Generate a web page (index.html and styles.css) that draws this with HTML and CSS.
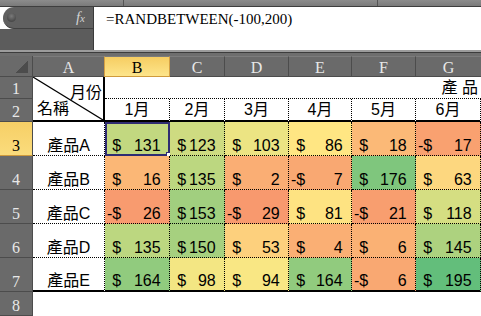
FILE: index.html
```html
<!DOCTYPE html>
<html lang="zh-Hant">
<head>
<meta charset="utf-8">
<title>RANDBETWEEN</title>
<link rel="stylesheet" href="styles.css">
</head>
<body>
<div class="app">
  <div class="topstrip"><span class="seg seg1"></span><span class="seg seg2"></span></div>
  <div class="fbar">
    <div class="namepanel">
      <div class="namebox"><div class="nbin"><span class="knob"></span><span class="fx">f<span class="fxx">x</span></span></div></div>
      <div class="namelow"></div>
    </div>
    <div class="formula">=RANDBETWEEN(-100,200)</div>
  </div>
  <div class="split"></div>
  <div class="sheet">
    <div class="corner"></div>
    <div class="ch">A</div>
    <div class="ch sel">B</div>
    <div class="ch">C</div>
    <div class="ch">D</div>
    <div class="ch">E</div>
    <div class="ch">F</div>
    <div class="ch last">G</div>

    <div class="rh">1</div>
    <div class="a12">
      <svg class="diag" viewBox="0 0 100 100" preserveAspectRatio="none"><line x1="0" y1="0" x2="100" y2="100" stroke="#000" stroke-width="1.2" vector-effect="non-scaling-stroke"/></svg>
      <span class="mon">月份</span>
      <span class="nam">名稱</span>
    </div>
    <div class="b1">產 品</div>

    <div class="rh">2</div>
    <div class="m">1月</div>
    <div class="m">2月</div>
    <div class="m">3月</div>
    <div class="m">4月</div>
    <div class="m">5月</div>
    <div class="m">6月</div>

    <div class="rh sel">3</div>
    <div class="lab">產品A</div>
    <div class="d cur" style="background:#C2D880"><span class="sg off">-</span><span>$</span><span class="v">131</span><span class="tr">-</span><span class="selbox"><span class="hdl"></span></span></div>
    <div class="d" style="background:#CEDB81"><span class="sg off">-</span><span>$</span><span class="v">123</span><span class="tr">-</span></div>
    <div class="d" style="background:#ECE483"><span class="sg off">-</span><span>$</span><span class="v">103</span><span class="tr">-</span></div>
    <div class="d" style="background:#FFE683"><span class="sg off">-</span><span>$</span><span class="v">86</span><span class="tr">-</span></div>
    <div class="d" style="background:#FBB977"><span class="sg off">-</span><span>$</span><span class="v">18</span><span class="tr">-</span></div>
    <div class="d" style="background:#F9A170"><span class="sg">-</span><span>$</span><span class="v">17</span><span class="tr">-</span></div>

    <div class="rh">4</div>
    <div class="lab">產品B</div>
    <div class="d" style="background:#FBB776"><span class="sg off">-</span><span>$</span><span class="v">16</span><span class="tr">-</span></div>
    <div class="d" style="background:#BCD780"><span class="sg off">-</span><span>$</span><span class="v">135</span><span class="tr">-</span></div>
    <div class="d" style="background:#FAAE74"><span class="sg off">-</span><span>$</span><span class="v">2</span><span class="tr">-</span></div>
    <div class="d" style="background:#F9A872"><span class="sg">-</span><span>$</span><span class="v">7</span><span class="tr">-</span></div>
    <div class="d" style="background:#7FC67D"><span class="sg off">-</span><span>$</span><span class="v">176</span><span class="tr">-</span></div>
    <div class="d" style="background:#FDD77F"><span class="sg off">-</span><span>$</span><span class="v">63</span><span class="tr">-</span></div>

    <div class="rh">5</div>
    <div class="lab">產品C</div>
    <div class="d" style="background:#F89B6F"><span class="sg">-</span><span>$</span><span class="v">26</span><span class="tr">-</span></div>
    <div class="d" style="background:#A1CF7F"><span class="sg off">-</span><span>$</span><span class="v">153</span><span class="tr">-</span></div>
    <div class="d" style="background:#F8996E"><span class="sg">-</span><span>$</span><span class="v">29</span><span class="tr">-</span></div>
    <div class="d" style="background:#FEE382"><span class="sg off">-</span><span>$</span><span class="v">81</span><span class="tr">-</span></div>
    <div class="d" style="background:#F89E6F"><span class="sg">-</span><span>$</span><span class="v">21</span><span class="tr">-</span></div>
    <div class="d" style="background:#D5DE82"><span class="sg off">-</span><span>$</span><span class="v">118</span><span class="tr">-</span></div>

    <div class="rh">6</div>
    <div class="lab">產品D</div>
    <div class="d" style="background:#BCD780"><span class="sg off">-</span><span>$</span><span class="v">135</span><span class="tr">-</span></div>
    <div class="d" style="background:#A6D07F"><span class="sg off">-</span><span>$</span><span class="v">150</span><span class="tr">-</span></div>
    <div class="d" style="background:#FDD07D"><span class="sg off">-</span><span>$</span><span class="v">53</span><span class="tr">-</span></div>
    <div class="d" style="background:#FAAF74"><span class="sg off">-</span><span>$</span><span class="v">4</span><span class="tr">-</span></div>
    <div class="d" style="background:#FAB174"><span class="sg off">-</span><span>$</span><span class="v">6</span><span class="tr">-</span></div>
    <div class="d" style="background:#ADD27F"><span class="sg off">-</span><span>$</span><span class="v">145</span><span class="tr">-</span></div>

    <div class="rh">7</div>
    <div class="lab r7">產品E</div>
    <div class="d r7" style="background:#91CB7E"><span class="sg off">-</span><span>$</span><span class="v">164</span><span class="tr">-</span></div>
    <div class="d r7" style="background:#F3E683"><span class="sg off">-</span><span>$</span><span class="v">98</span><span class="tr">-</span></div>
    <div class="d r7" style="background:#F9E784"><span class="sg off">-</span><span>$</span><span class="v">94</span><span class="tr">-</span></div>
    <div class="d r7" style="background:#91CB7E"><span class="sg off">-</span><span>$</span><span class="v">164</span><span class="tr">-</span></div>
    <div class="d r7" style="background:#F9A872"><span class="sg">-</span><span>$</span><span class="v">6</span><span class="tr">-</span></div>
    <div class="d r7" style="background:#63BE7B"><span class="sg off">-</span><span>$</span><span class="v">195</span><span class="tr">-</span></div>

    <div class="rh">8</div>
    <div class="empty"></div>
  </div>
</div>
</body>
</html>
```
FILE: styles.css
```css
* { box-sizing: border-box; margin: 0; padding: 0; }
html, body { width: 481px; height: 316px; overflow: hidden; background: #fff; }
body { font-family: "Liberation Sans", "Noto Sans CJK TC", sans-serif; color: #000; }

.topstrip { height: 7px; display: flex; background: linear-gradient(#8c8c8c, #7a7a7a); border-bottom: 1px solid #3e3e3e; }
.seg { display: block; height: 100%; border-right: 1px solid #555; }
.seg1 { width: 124px; }
.seg2 { width: 254px; }

.fbar { display: flex; height: 43px; }
.namepanel { width: 94px; display: flex; flex-direction: column; background: #5c5c5c; border-right: 1px solid #3a3a3a; }
.namebox { height: 22px; background: #fff; }
.nbin { height: 100%; margin-left: 3px; background: #606060; border-radius: 11px 0 0 11px; border-bottom: 1px solid #404040; display: flex; align-items: center; }
.knob { width: 9px; height: 9px; border-radius: 50%; margin-left: 4px; background: radial-gradient(circle at 50% 35%, #7a7a7a, #4a4a4a 70%); }
.fx { margin-left: auto; margin-right: 8px; font-family: "Liberation Serif", serif; font-style: italic; font-size: 15px; color: #d2d2d2; line-height: 1; }
.fxx { font-size: 11px; }
.namelow { flex: 1; background: #5c5c5c; }
.formula { flex: 1; background: #fff; padding: 5px 0 0 12px; font-family: "Liberation Serif", serif; font-size: 15px; line-height: 15px; white-space: nowrap; }

.split { height: 6px; background: linear-gradient(#9c9c9c 0 2px, #3c3c3c 2px 3px, #6e6e6e 3px); }

.sheet {
  display: grid;
  grid-template-columns: 33px 72px 65px 55px 64px 63px 64px 65px;
  grid-template-rows: 21px 22px 23px 34px 34px 34px 34px 34px 24px;
}

.corner { background: linear-gradient(to bottom right, transparent 50%, #4c4c4c 50%) no-repeat right 4px bottom 3px / 13px 12px, #6a6a6a; border-right: 1px solid #4c4c4c; border-bottom: 1px solid #4c4c4c; }
.ch { background: #6a6a6a; border-right: 1px solid #4c4c4c; border-bottom: 1px solid #4c4c4c; border-top: 1px solid #7c7c7c; color: #e8e8e8; font-family: "Liberation Serif", serif; font-size: 16px; line-height: 1; display: flex; justify-content: center; align-items: flex-end; }
.ch.last { border-right: none; }
.ch.sel { background: linear-gradient(#f6cd62, #fde58b); color: #000; border-right: 1px solid #d4a044; border-left: 1px solid #d4a044; border-bottom: 1px solid #cf9a3c; margin-left: -1px; }

.rh { background: #6a6a6a; border-right: 1px solid #4c4c4c; border-bottom: 1px solid #4c4c4c; color: #e8e8e8; font-family: "Liberation Serif", serif; font-size: 16px; line-height: 1; display: flex; justify-content: center; align-items: flex-end; padding-bottom: 1px; }
.rh.sel { background: linear-gradient(#f6cf66, #fbdc7c); color: #000; border-bottom: 1px solid #cf9a3c; }

.a12 { grid-row: span 2; position: relative; border-right: 2px solid #000; border-bottom: 2px solid #000; display: flex; flex-direction: column; justify-content: space-between; font-size: 16px; line-height: 1; padding: 8px 1px 3px 4px; }
.diag { position: absolute; left: 0; top: 0; width: 100%; height: 100%; }
.mon { align-self: flex-end; }
.nam { align-self: flex-start; }

.b1 { grid-column: span 6; border-bottom: 1px dotted #000; display: flex; justify-content: flex-end; align-items: flex-end; font-size: 16px; line-height: 1; padding: 0 3px 2px 0; }

.m { border-right: 1px dotted #000; border-bottom: 2px solid #000; display: flex; justify-content: center; align-items: flex-end; font-size: 16px; line-height: 1; padding-bottom: 2px; }

.lab { border-right: 1px dotted #000; border-bottom: 1px dotted #000; display: flex; justify-content: center; align-items: flex-end; font-size: 16px; line-height: 1; padding-bottom: 1px; }

.d { position: relative; border-right: 1px dotted #000; border-bottom: 1px dotted #000; display: flex; align-items: flex-end; font-size: 16px; line-height: 1; padding: 0 3px 1px 2px; white-space: nowrap; }
.d .v { margin-left: auto; }
.d .tr, .d .off { visibility: hidden; }
.r7 { border-bottom: 2px solid #000; }

.selbox { position: absolute; left: 0; top: 0; right: -1px; bottom: -1px; border: 2px solid #2f2c72; }
.hdl { position: absolute; right: -4px; bottom: -4px; width: 6px; height: 6px; background: #fff; border: 1px solid #2f2c72; }

.empty { grid-column: span 7; background: #fff; }
```
